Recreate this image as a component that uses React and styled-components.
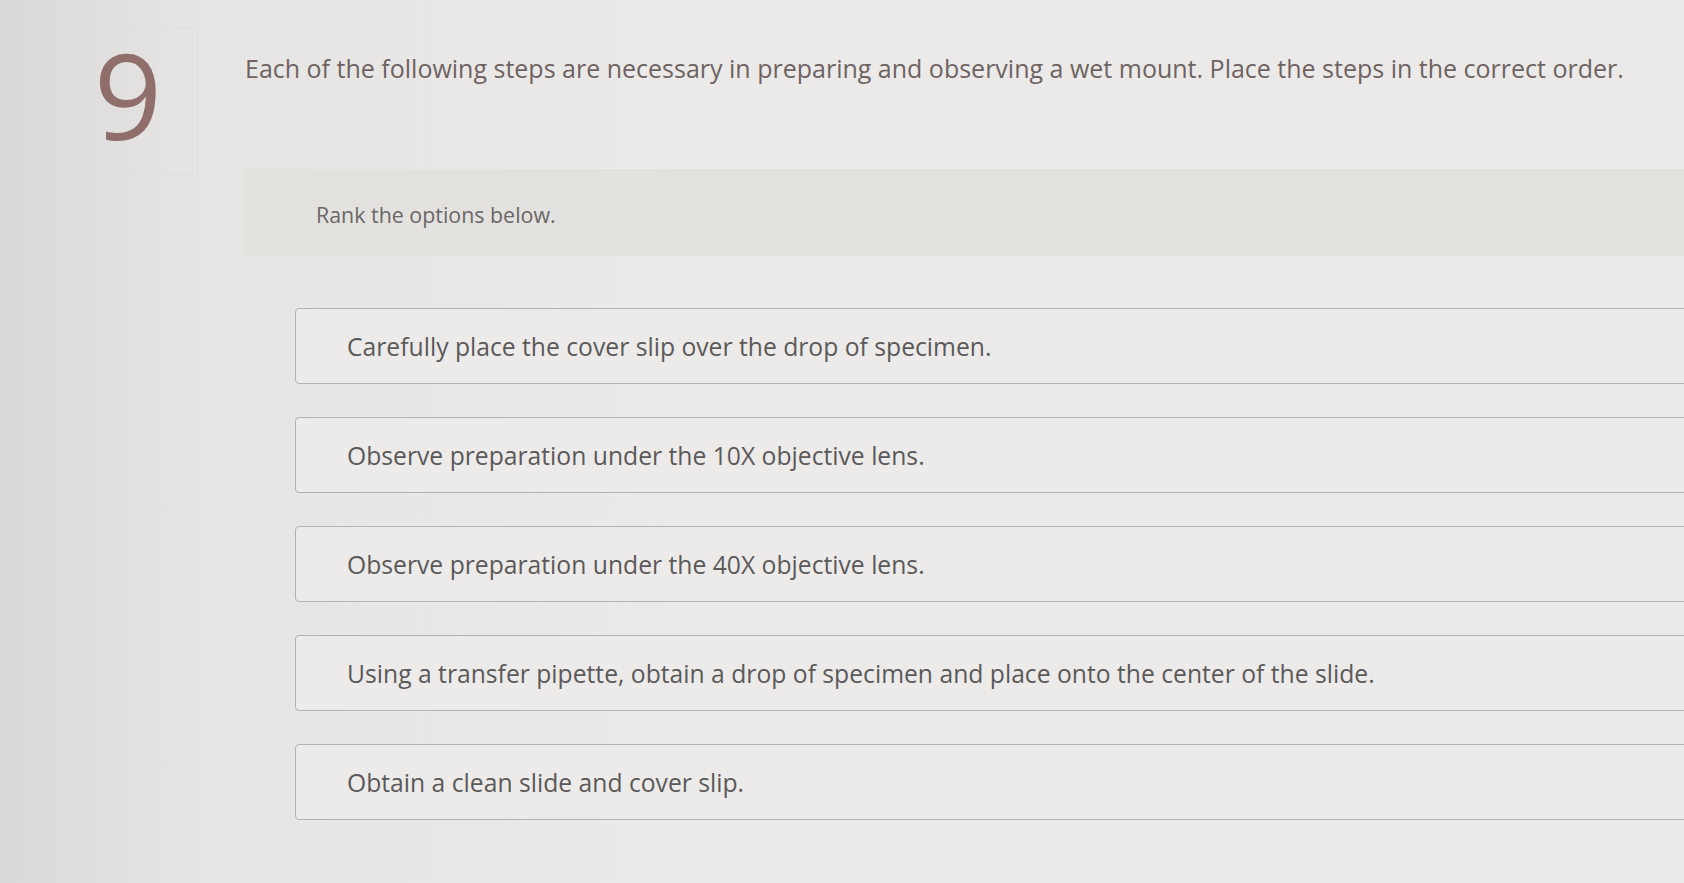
import React from "react";
import styled, { createGlobalStyle } from "styled-components";

const GlobalStyle = createGlobalStyle`
    html, body {
        margin: 0;
        padding: 0;
        height: 100%;
    }
    body {
        background: linear-gradient(90deg, #dad9d7 0%, #e6e5e3 12%, #ebeae8 40%, #ebeae8 100%);
        font-family: "Open Sans", "Liberation Sans", sans-serif;
        overflow: hidden;
    }
`;

const steps = [
    "Carefully place the cover slip over the drop of specimen.",
    "Observe preparation under the 10X objective lens.",
    "Observe preparation under the 40X objective lens.",
    "Using a transfer pipette, obtain a drop of specimen and place onto the center of the slide.",
    "Obtain a clean slide and cover slip.",
];

export default function App() {
    return (
        <Page>
            <GlobalStyle />
            <NumberBox>9</NumberBox>
            <Main>
                <Question>
                    Each of the following steps are necessary in preparing and observing a wet mount. Place the steps in the correct order.
                </Question>
                <Prompt>Rank the options below.</Prompt>
                <Options>
                    {steps.map((step) => (
                        <Option key={step}>{step}</Option>
                    ))}
                </Options>
            </Main>
        </Page>
    );
}

const Page = styled.div`
    display: flex;
    align-items: flex-start;
    width: 1684px;
    height: 883px;
    overflow: hidden;
`;

const NumberBox = styled.div`
    flex: none;
    width: 140px;
    height: 147px;
    margin: 28px 0 0 58px;
    box-sizing: border-box;
    border: 1px solid #e0dedc;
    display: flex;
    justify-content: center;
    padding-top: 6px;
    font-size: 119px;
    line-height: 1;
    color: #8f6e6b;
    font-weight: 400;
`;

const Main = styled.div`
    flex: 1;
    display: flex;
    flex-direction: column;
    margin-left: 47px;
    min-width: 0;
`;

const Question = styled.div`
    margin-top: 51px;
    font-size: 25px;
    line-height: 34px;
    color: #6e6362;
    white-space: nowrap;
`;

const Prompt = styled.div`
    margin-top: 84px;
    height: 87px;
    box-sizing: border-box;
    padding: 31px 0 0 71px;
    background: #e3e2df;
    font-size: 21.4px;
    color: #6a6767;
`;

const Options = styled.div`
    display: flex;
    flex-direction: column;
    gap: 33px;
    margin-top: 52px;
    padding-left: 50px;
`;

const Option = styled.div`
    height: 76px;
    box-sizing: border-box;
    margin-right: -10px;
    display: flex;
    align-items: center;
    padding-left: 51px;
    border: 1.5px solid #b4b2b0;
    border-radius: 4px;
    background: #ecebe9;
    font-size: 24.7px;
    color: #5b5959;
`;
